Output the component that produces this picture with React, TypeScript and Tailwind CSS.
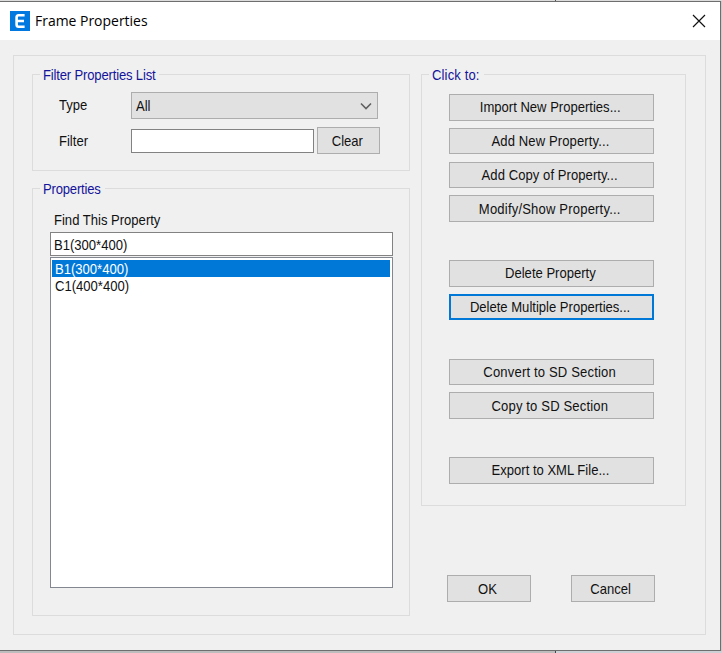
import type { ReactNode } from "react";

interface TextProps {
  children: ReactNode;
  className?: string;
}

// dialog font is slightly condensed
const Text = ({ children, className = "" }: TextProps) => (
  <span
    className={`inline-block origin-left scale-x-[0.9] whitespace-nowrap ${className}`}
  >
    {children}
  </span>
);

interface ButtonProps {
  label: string;
  className?: string;
  tracking?: string;
  focused?: boolean;
}

const Button = ({
  label,
  className = "",
  tracking = "",
  focused = false,
}: ButtonProps) => (
  <button
    className={`flex items-center justify-center bg-[#e1e1e1] pt-px ${
      focused ? "border-2 border-[#0078d7]" : "border border-[#adadad]"
    } ${className}`}
  >
    <span
      className={`inline-block scale-x-[0.9] whitespace-nowrap ${tracking}`}
    >
      {label}
    </span>
  </button>
);

interface GroupProps {
  title: string;
  titleClass: string;
  className: string;
  children: ReactNode;
}

const Group = ({ title, titleClass, className, children }: GroupProps) => (
  <fieldset className={`border border-[#dcdcdc] ${className}`}>
    <legend
      className={`ml-[7px] h-[17px] pl-[3px] leading-[19px] text-[#14149b] ${titleClass}`}
    >
      <Text>{title}</Text>
    </legend>
    {children}
  </fieldset>
);

const ACTION_GROUPS = [
  [
    { label: "Import New Properties...", tracking: "" },
    { label: "Add New Property...", tracking: "tracking-[0.12px]" },
    { label: "Add Copy of Property...", tracking: "tracking-[0.07px]" },
    { label: "Modify/Show Property...", tracking: "tracking-[0.2px]" },
  ],
  [
    { label: "Delete Property", tracking: "" },
    { label: "Delete Multiple Properties...", tracking: "", focused: true },
  ],
  [
    { label: "Convert to SD Section", tracking: "tracking-[0.18px]" },
    { label: "Copy to SD Section", tracking: "tracking-[0.17px]" },
  ],
  [{ label: "Export to XML File...", tracking: "" }],
];

const SECTIONS = ["B1(300*400)", "C1(400*400)"];
const SELECTED = "B1(300*400)";

const TitleBar = () => (
  <div className="flex h-[38px] items-center bg-white pl-[10px] pr-[14px]">
    <svg width="20" height="20" viewBox="0 0 20 20">
      <rect width="20" height="20" fill="#0078e0" />
      <path
        d="M14.6 4.3H8.6Q6.6 4.3 6.6 6.5V13.5Q6.6 15.7 8.6 15.7H14.6M6.6 10H14"
        fill="none"
        stroke="#fff"
        strokeWidth="2.6"
      />
    </svg>
    <span className="ml-[5px] mt-[-2px] origin-left scale-x-[0.93] whitespace-nowrap font-['Open_Sans','Noto_Sans',sans-serif] text-[15px] text-black">
      Frame Properties
    </span>
    <svg className="ml-auto" width="14" height="14" viewBox="0 0 14 14">
      <path d="M1 1l12 12M13 1L1 13" stroke="#111" strokeWidth="1.2" />
    </svg>
  </div>
);

export default function App() {
  return (
    <div className="flex h-[653px] w-[722px] flex-col overflow-hidden bg-[#c9c9c9] font-['Liberation_Sans',Arial,sans-serif] text-[14.5px] leading-[17px] text-[#111]">
      <div className="flex h-px justify-start bg-[#dcdcdc]">
        <div className="ml-[555px] w-px bg-[#555]" />
      </div>
      <div className="h-[650px] w-[721px] border-y border-r border-[#6e6e6e] bg-[#f0f0f0]">
        <TitleBar />
        <div className="ml-[13px] mt-[15px] flex h-[580px] w-[693px] gap-[11px] border border-[#dcdcdc] pl-[18px] pt-[10px]">
          <div className="flex w-[378px] flex-col gap-[9px]">
            <Group
              title="Filter Properties List"
              titleClass="w-[119px] tracking-[-0.18px]"
              className="h-[105px]"
            >
              <div className="mt-[9px] flex h-[27px] pl-[26px]">
                <div className="w-[72px] pt-[5px]">
                  <Text>Type</Text>
                </div>
                <div className="flex w-[247px] items-center justify-between border border-[#adadad] bg-[#e1e1e1] pl-1 pr-[5px]">
                  <Text className="pt-px">All</Text>
                  <svg width="12" height="8" viewBox="0 0 12 8">
                    <path
                      d="M1 1.5l5 5 5-5"
                      fill="none"
                      stroke="#606060"
                      strokeWidth="1.6"
                    />
                  </svg>
                </div>
              </div>
              <div className="mt-2 flex h-[27px] pl-[26px]">
                <div className="w-[72px] pt-[6px]">
                  <Text>Filter</Text>
                </div>
                <input className="mt-[2px] h-6 w-[183px] border border-[#828282] bg-white" />
                <Button label="Clear" className="ml-[3px] w-[63px] pr-[3px]" />
              </div>
            </Group>
            <Group
              title="Properties"
              titleClass="w-[65px] tracking-[-0.2px]"
              className="h-[436px]"
            >
              <div className="pl-[17px]">
                <div className="mt-[15px] pl-1">
                  <Text>Find This Property</Text>
                </div>
                <div className="mt-[3px] flex h-6 w-[343px] items-center border border-[#828282] bg-white pl-[3px] pt-[2px]">
                  <Text>{SELECTED}</Text>
                </div>
                <ul className="mt-px h-[331px] w-[343px] border border-[#828790] bg-white p-px pt-[2px] leading-[18px]">
                  {SECTIONS.map((name) => (
                    <li
                      key={name}
                      className={`h-[17px] w-[338px] pl-[3px] ${
                        name === SELECTED ? "bg-[#0078d7] text-white" : ""
                      }`}
                    >
                      <Text>{name}</Text>
                    </li>
                  ))}
                </ul>
              </div>
            </Group>
          </div>
          <div className="w-[265px]">
            <Group
              title="Click to:"
              titleClass="w-[55px] tracking-[0.15px]"
              className="h-[440px]"
            >
              <div className="flex flex-col gap-[38.25px] pl-[27px] pt-[11px]">
                {ACTION_GROUPS.map((actions) => (
                  <div
                    key={actions[0].label}
                    className="flex flex-col gap-[7.25px]"
                  >
                    {actions.map((action) => (
                      <Button
                        key={action.label}
                        {...action}
                        className="h-[26.5px] w-[205px] pr-[3px]"
                      />
                    ))}
                  </div>
                ))}
              </div>
            </Group>
            <div className="mt-[69px] flex gap-10 pl-[26px]">
              <Button label="OK" className="h-[27px] w-[84px] pr-1" />
              <Button label="Cancel" className="h-[27px] w-[84px] pr-1" />
            </div>
          </div>
        </div>
      </div>
      <div className="flex h-[2px] bg-[#bdbdbd]">
        <div className="ml-[555px] w-px bg-[#444]" />
        <div className="flex-1 bg-[#cdd1d5]" />
      </div>
    </div>
  );
}
